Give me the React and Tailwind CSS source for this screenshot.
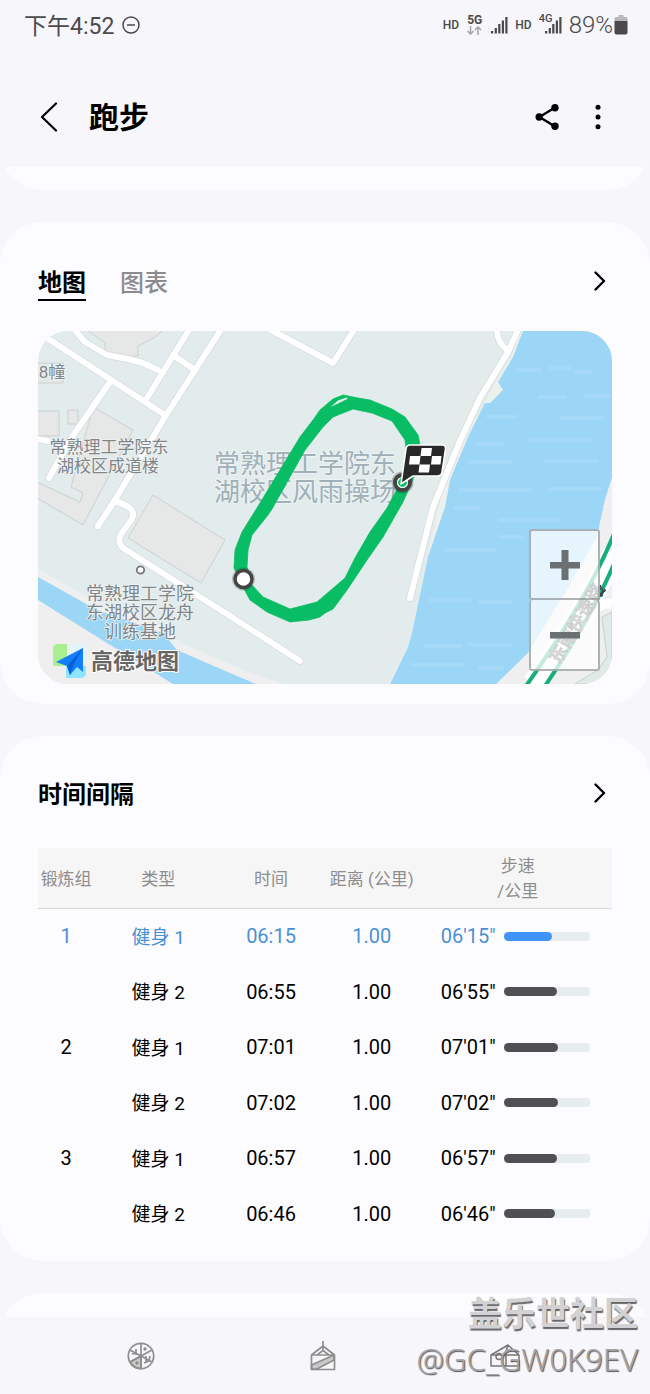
import React from "react";

const intervals = [
  { set: "1", type: "健身 1", time: "06:15", distance: "1.00", pace: "06'15\"", fill: 56, active: true },
  { set: "", type: "健身 2", time: "06:55", distance: "1.00", pace: "06'55\"", fill: 62 },
  { set: "2", type: "健身 1", time: "07:01", distance: "1.00", pace: "07'01\"", fill: 63 },
  { set: "", type: "健身 2", time: "07:02", distance: "1.00", pace: "07'02\"", fill: 63 },
  { set: "3", type: "健身 1", time: "06:57", distance: "1.00", pace: "06'57\"", fill: 62 },
  { set: "", type: "健身 2", time: "06:46", distance: "1.00", pace: "06'46\"", fill: 60 },
];

function SignalBars() {
  return (
    <svg className="h-[18px] w-[17px]" viewBox="0 0 17 18" fill="#4a4a4c" aria-hidden="true">
      <rect x="0" y="15" width="2.2" height="2.5" />
      <rect x="3.7" y="12" width="2.2" height="5.5" />
      <rect x="7.2" y="8" width="2.2" height="9.5" />
      <rect x="10.8" y="4.5" width="2.2" height="13" />
      <rect x="14.3" y="1" width="2.2" height="16.5" />
    </svg>
  );
}

function StatusBar() {
  return (
    <div className="flex h-[50px] items-center justify-between pr-[22px] pl-6 text-[#4a4a4c]">
      <div className="flex items-center gap-2 pt-1">
        <span className="text-[23px] leading-7">下午4:52</span>
        <svg className="mb-1 h-[18px] w-[18px]" viewBox="0 0 18 18" fill="none" stroke="#4a4a4c" strokeWidth="1.5" aria-hidden="true">
          <circle cx="9" cy="9" r="8" />
          <path d="M5 9h8" />
        </svg>
      </div>
      <div className="flex items-center">
        <span className="text-[12px] leading-4 font-medium">HD</span>
        <div className="ml-2 flex flex-col items-center">
          <span className="text-[12px] leading-[11px] font-bold">5G</span>
          <svg className="h-[9px] w-[15px]" viewBox="0 0 15 9" fill="none" stroke="#a5a5a8" strokeWidth="1.5" aria-hidden="true">
            <path d="M3.5 0v8M.5 5l3 3 3-3M11 9V1M8 4l3-3 3 3" />
          </svg>
        </div>
        <div className="mr-[7px] ml-[9px]"><SignalBars /></div>
        <span className="text-[12px] leading-4 font-medium">HD</span>
        <div className="relative ml-[13px]">
          <span className="absolute -top-[3px] -left-[6px] bg-[#f6f6fb] text-[11px] leading-[11px] font-medium">4G</span>
          <SignalBars />
        </div>
        <span className="mr-px ml-[7px] text-[24px] leading-7 font-light">89%</span>
        <svg className="h-5 w-[14px]" viewBox="0 0 14 20" aria-hidden="true">
          <path d="M4.500 2V.8q0-.8.8-.8h3.400q.8 0 .8.800V2H12q1.500 0 1.500 1.500V6H.5V3.500Q.5 2 2 2z" fill="#b9b9bc" />
          <path d="M.5 6h13v11.500q0 2-2 2h-9q-2 0-2-2z" fill="#4a4a4c" />
        </svg>
      </div>
    </div>
  );
}

function Header() {
  return (
    <header className="flex h-[117px] items-center justify-between pt-4 pr-11 pl-10">
      <div className="flex items-center gap-[29px]">
        <button type="button" aria-label="返回">
          <svg className="h-[30px] w-5" viewBox="0 0 20 30" fill="none" stroke="#000" strokeWidth="2.2" strokeLinecap="round" strokeLinejoin="round">
            <path d="M16 1.500 2 15 16 28.500" />
          </svg>
        </button>
        <h1 className="pt-[3px] text-[30px] leading-9 font-bold text-black">跑步</h1>
      </div>
      <div className="flex items-center gap-[31px]">
        <button type="button" aria-label="分享">
          <svg className="h-[28px] w-6" viewBox="0 0 24 28">
            <path d="M20 4.500 4.500 14 20 23.500" fill="none" stroke="#000" strokeWidth="2.400" />
            <circle cx="20" cy="4.800" r="3.700" />
            <circle cx="4.200" cy="14" r="3.700" />
            <circle cx="20" cy="23.200" r="3.700" />
          </svg>
        </button>
        <button type="button" aria-label="更多选项" className="flex w-4 justify-center">
          <svg className="h-[28px] w-[6px]" viewBox="0 0 6 28">
            <circle cx="3" cy="4.200" r="2.500" />
            <circle cx="3" cy="14" r="2.500" />
            <circle cx="3" cy="23.800" r="2.500" />
          </svg>
        </button>
      </div>
    </header>
  );
}

function Chevron() {
  return (
    <svg className="h-5 w-3" viewBox="0 0 12 20" fill="none" stroke="#000" strokeWidth="2.400" strokeLinecap="round" strokeLinejoin="round" aria-hidden="true">
      <path d="M1.500 1.500 10 10l-8.500 8.500" />
    </svg>
  );
}

const roads = [
  "M36 333 50 340 165 415",
  "M222 328 165 417 110 508",
  "M75 330 85 342 107 355 128 359 143 363 158 370",
  "M189 330 147 398",
  "M173 355 195 370",
  "M110 382 72 437 49 478",
  "M36 439 48 441",
  "M98 526 115 500 130 508Q135 513 132 519L121 534Q117 542 123 548L230 616 300 661",
  "M271 330 333 363 354 330",
  "M497 330Q497 342 508 351",
  "M518 330 508 352 480 398 460 441 442 485 433 507 410 598",
];

const streaks = [
  "M518 370h22M550 368h20M575 372h16", "M540 397h25M585 396h24", "M488 417h28M562 418h40",
  "M478 444h24M530 440h60", "M470 462h40M545 461h52", "M460 490h70M550 489h50",
  "M455 508h24M500 520h60", "M445 550h50M500 537h22", "M430 600h40M480 602h30", "M425 646h36M470 645h40", "M412 665h50M480 668h22",
];

function TrackMap() {
  return (
    <svg className="block h-auto w-full" viewBox="38 331 574 353" role="img" aria-label="跑步路线地图">
      <rect x="38" y="331" width="574" height="353" fill="#e3ecec" />

      {/* buildings */}
      <g fill="#e6e7e7" stroke="#c5caca" strokeWidth=".8">
        <path d="M87 330 105 343v10l5 3h28v-10l17-9 9-7z" />
        <path d="M37 363h26v20H37zM37 411h22v25H37zM68 410h10v14H68z" />
        <path d="M93 407 133 430 83 525 37 498V482L80 502l3-9-12-6z" />
        <path d="M153 495 225 540 201 583 128 538z" />
      </g>

      {/* stream */}
      <path d="M38 569 97 602 165 627 181 643 255 675 285 684H38z" fill="#efefef" />
      <path d="M38 577 97 610 163 633 177 650 230 673 256 684H173L107 643 38 600z" fill="#9bd6f7" />

      {/* river */}
      <path d="M521 331 511 357 496 382 466 437 444 482 428 557 412 633 407 647 388 684H612V331z" fill="#edf1ee" />
      <path d="M523 331 513 357 498 382 503 390 490 403 485 403 468 437 450 480 445 507 428 557 412 633 408 647 390 684H497L528 653 567 590 597 537 605 500 612 478V331z" fill="#9bd6f7" />
      <g stroke="#b5e1fa" strokeWidth="4" strokeLinecap="round" opacity=".35" fill="none">
        {streaks.map((d) => <path key={d} d={d} />)}
      </g>

      {/* east bank */}
      <path d="M612 478 605 500 597 537 567 590 528 653 496 684H612z" fill="#efefef" />
      <path d="M612 612 602 617 607 657 598 670 575 684H612z" fill="#e0ebe8" stroke="#c5cfcc" />
      <path d="M615 553Q580 620 534 684" fill="none" stroke="#fff" strokeWidth="24" />
      <path d="M612 604Q596 600 584 628" fill="none" stroke="#fff" strokeWidth="10" />
      <path d="M614 534Q587 600 526 686" fill="none" stroke="#16ae7d" strokeWidth="4" />
      <path d="M614 564Q590 620 545 686" fill="none" stroke="#16ae7d" strokeWidth="4" />
      <text transform="translate(559 665) rotate(-59)" fontSize="18" fill="#fff" stroke="#333" strokeWidth="1">东南快速路</text>

      {/* roads */}
      <g fill="none" strokeLinecap="round" strokeLinejoin="round">
        <g stroke="#d3dada" strokeWidth="7.400">
          {roads.map((d) => <path key={d} d={d} />)}
        </g>
        <g stroke="#fff" strokeWidth="6">
          {roads.map((d) => <path key={d} d={d} />)}
        </g>
      </g>

      {/* place names */}
      <g fill="#7f8588" fontSize="18" textAnchor="middle" stroke="#f0f4f4" strokeWidth="1.500" paintOrder="stroke">
        <text x="52" y="378" fontSize="17">8幢</text>
        <text x="109" y="453" fontSize="17">常熟理工学院东</text>
        <text x="108" y="472" fontSize="17">湖校区成道楼</text>
        <text x="140" y="600">常熟理工学院</text>
        <text x="140" y="619">东湖校区龙舟</text>
        <text x="140" y="638">训练基地</text>
      </g>
      <g fill="#9fb0b8" fontSize="26" textAnchor="middle" stroke="#edf3f3" strokeWidth="2" paintOrder="stroke">
        <text x="305" y="473">常熟理工学院东</text>
        <text x="305" y="501">湖校区风雨操场</text>
      </g>
      <circle cx="140.500" cy="570" r="3.700" fill="#fff" stroke="#777" strokeWidth="1.800" />

      {/* running route */}
      <path
        fillRule="evenodd"
        fill="#08bd63"
        stroke="#08bd63"
        strokeWidth=".8"
        strokeLinejoin="round"
        d="M343 395 358 398 370 400 392 409 405 417 418 435 421 450 417 470 403 502 383 537 367 560 347 590 333 609 325 613 320 617 309 620 290 622 267 612 250 600 243 587 234 568 235 550 242 532 257 508 300 437 313 420 320 410 333 399Z
           M353 409 372 413 392 421 405 440 407 455 402 480 387 508 370 532 355 558 345 578 317 602 290 609 263 597 252 585 247 567 248 550 252 535 268 515 272 509 305 450 323 427 333 417Z
           M329 408 338 400 347 397 348 399 338 404Z"
      />
      <circle cx="243.500" cy="579" r="11.500" fill="#333" opacity=".25" />
      <circle cx="243.500" cy="579" r="8.500" fill="#fff" stroke="#444" strokeWidth="3.500" />
      <circle cx="402.500" cy="482.500" r="11" fill="#333" opacity=".3" />
      <circle cx="402.500" cy="482.500" r="7.500" fill="#08bd63" stroke="#444" strokeWidth="4" />
      <circle cx="402.500" cy="482.500" r="5" fill="none" stroke="#fff" strokeWidth="1.200" />
      <path d="M410 445H442Q446 445 445.500 449L442 472Q441.500 476 437 476H413L401 484 406 449Q406.500 445 410 445Z" fill="#292929" stroke="#fff" strokeWidth="1.600" strokeLinejoin="round" />
      <path d="M410 456h10.500l-1 8.500H409zM421.500 448h10.500l-1 8h-10.500zM432 456h9.500l-1 8.500H431zM419.500 464.500H430l-1 8h-10.500z" fill="#fff" />

      {/* map provider mark */}
      <path d="M58 644h9v22H53v-17q0-5 5-5z" fill="#a9ee91" />
      <path d="M70 644h9q6 0 6 5v11H70z" fill="#e2f5fb" />
      <path d="M66 666h20v6q0 6-6 6H66z" fill="#8ee4fb" />
      <path d="M83 648 56 662 67 666 70 675 77 667 83 672z" fill="#157efb" />
      <path d="M83 648 67 666 70 675 74 664z" fill="#0860d8" />
      <text x="91" y="669" fontSize="22" fontWeight="700" fill="#666" stroke="#fff" strokeWidth="2" paintOrder="stroke">高德地图</text>
    </svg>
  );
}

function MapCard() {
  return (
    <section className="mt-8 rounded-[42px] bg-[#fcfcff] px-[38px] pt-[45px] pb-5">
      <div className="flex items-start justify-between pr-[6px]">
        <div className="flex gap-[34px] text-[24px] leading-8" role="tablist">
          <button type="button" role="tab" aria-selected="true" className="border-b-2 border-black font-bold text-black">地图</button>
          <button type="button" role="tab" aria-selected="false" className="border-b-2 border-transparent font-medium text-[#8b8b8e]">图表</button>
        </div>
        <button type="button" aria-label="查看地图" className="mt-1"><Chevron /></button>
      </div>
      <div className="relative mt-[30px] overflow-hidden rounded-[30px]">
        <TrackMap />
        <div className="absolute right-3 bottom-[13px] flex w-[71px] flex-col">
          <button type="button" aria-label="放大" className="flex h-[71px] items-center justify-center rounded-[3px] border-2 border-[#8d9395]/70 bg-white/75">
            <svg className="h-[30px] w-[30px]" viewBox="0 0 30 30" fill="#6b7072"><path d="M0 12h11.500V0h7v12H30v6.500H18.500V30h-7V18.500H0z" /></svg>
          </button>
          <button type="button" aria-label="缩小" className="flex h-[71px] items-center justify-center rounded-[3px] border-2 border-t-0 border-[#8d9395]/70 bg-white/75">
            <svg className="h-[30px] w-[30px]" viewBox="0 0 30 30" fill="#6b7072"><path d="M0 12h30v6.500H0z" /></svg>
          </button>
        </div>
      </div>
    </section>
  );
}

function IntervalCard() {
  return (
    <section className="mt-8 rounded-[42px] bg-[#fcfcff] px-[38px] pt-[42px] pb-5">
      <div className="flex items-start justify-between pr-[6px]">
        <h2 className="pt-px text-[24px] leading-8 font-bold text-black">时间间隔</h2>
        <button type="button" aria-label="查看时间间隔" className="mt-[5px]"><Chevron /></button>
      </div>
      <table className="mt-[37px] w-full table-fixed border-collapse text-center text-[20px] leading-6">
        <colgroup>
          <col className="w-[9.8%]" />
          <col className="w-[22.3%]" />
          <col className="w-[17%]" />
          <col className="w-[18.1%]" />
          <col className="w-[32.8%]" />
        </colgroup>
        <thead>
          <tr className="h-[60px] border-b border-[#d9d9d9] bg-[#f6f6f6] text-[17px] leading-[25px] text-[#8d8d8d]">
            <th className="p-0 pt-[3px] font-normal whitespace-nowrap">锻炼组</th>
            <th className="p-0 pt-[3px] font-normal">类型</th>
            <th className="p-0 pt-[3px] font-normal">时间</th>
            <th className="p-0 pt-[3px] font-normal whitespace-nowrap">距离 (公里)</th>
            <th className="p-0 pt-[3px] font-normal">步速<br />/公里</th>
          </tr>
        </thead>
        <tbody>
          {intervals.map((row, i) => (
            <tr
              key={i}
              className={`${row.set ? "h-[56px]" : "h-[55px]"} ${row.active ? "text-[#4a90d4]" : "text-black"}`}
            >
              <td className="p-0">{row.set}</td>
              <td className="p-0 pt-[3px] text-[19px]">{row.type}</td>
              <td className="p-0">{row.time}</td>
              <td className="p-0">{row.distance}</td>
              <td className="p-0">
                <div className="flex items-center pl-[17px]">
                  <span className="w-[63px] text-left">{row.pace}</span>
                  <div className="h-[9px] w-[86px] overflow-hidden rounded-[3px] bg-[#e7ecef]">
                    <div
                      className={row.active ? "h-full rounded-full bg-[#4093f7]" : "h-full rounded-full bg-[#505052]"}
                      style={{ width: `${row.fill}%` }}
                    />
                  </div>
                </div>
              </td>
            </tr>
          ))}
        </tbody>
      </table>
    </section>
  );
}

function BottomNav() {
  return (
    <nav className="relative flex h-[77px] items-center bg-[#f6f6fb] pr-[54px] pl-[50px]">
      <div className="flex flex-1 justify-center">
        <button type="button" aria-label="最近任务">
          <svg className="h-7 w-7" viewBox="0 0 28 28" fill="none" stroke="#8e8e8e" strokeWidth="1.700">
            <path d="M14 14v12.500A12.500 12.500 0 0 1 3 20z" fill="#c9c9c9" />
            <circle cx="14" cy="14" r="12.700" />
            <path d="M14 1.500v25M3 8l22 12M25 8 3 20M5 12l4-1V7M9 13V8M19 20v-4M17 21l5-2 1-5M19 14v3" />
            <circle cx="18" cy="7" r=".8" />
            <circle cx="10" cy="21" r=".8" />
          </svg>
        </button>
      </div>
      <div className="flex flex-1 justify-center">
        <button type="button" aria-label="主屏幕">
          <svg className="h-[30px] w-7" viewBox="0 0 28 30" fill="none" stroke="#8e8e8e" strokeWidth="1.700">
            <path d="M2.500 24 25 14v5L8 28H2.500z" fill="#c9c9c9" />
            <path d="M2.500 14h23v14.500h-23zM2.500 14 14 5l11.500 9M14 0v10M14 9.500l-6 4.500M14 9.500l6 4.500" strokeLinejoin="round" />
          </svg>
        </button>
      </div>
      <div className="flex flex-1 justify-center">
        <button type="button" aria-label="返回上一页">
          <svg className="h-[26px] w-[30px]" viewBox="0 0 30 26" fill="none" stroke="#777" strokeWidth="1.500" strokeLinejoin="round">
            <path d="M1 12 18 2l11 10v11H1zM1 12h28M16 12v11M18 2l-3 10" />
            <circle cx="9" cy="13.500" r="3" />
            <circle cx="22" cy="18" r=".7" />
          </svg>
        </button>
      </div>
      <div className="pointer-events-none absolute right-3 bottom-3 text-right whitespace-nowrap">
        <p className="text-[34px] leading-[44px] font-bold text-[#d2d2d4] [text-shadow:1px_2px_1px_#666]">盖乐世社区</p>
        <p className="font-['Noto_Sans','Noto_Sans_CJK_SC',sans-serif] text-[31px] leading-[46px] font-light text-[#a4a4a8] [text-shadow:1px_1px_1px_#555]">@GC_GW0K9EV</p>
      </div>
    </nav>
  );
}

export default function App() {
  return (
    <div className="min-h-screen bg-[#f6f6fb] font-['Roboto','Noto_Sans_CJK_SC',sans-serif]" lang="zh-CN">
      <StatusBar />
      <Header />
      <main>
        <div className="flex h-[23px] flex-col justify-end overflow-hidden">
          <div className="h-24 shrink-0 rounded-[42px] bg-[#fcfcff]" />
        </div>
        <MapCard />
        <IntervalCard />
        <div className="mt-8 h-6 overflow-hidden">
          <div className="h-24 rounded-[42px] bg-[#fcfcff]" />
        </div>
      </main>
      <BottomNav />
    </div>
  );
}
